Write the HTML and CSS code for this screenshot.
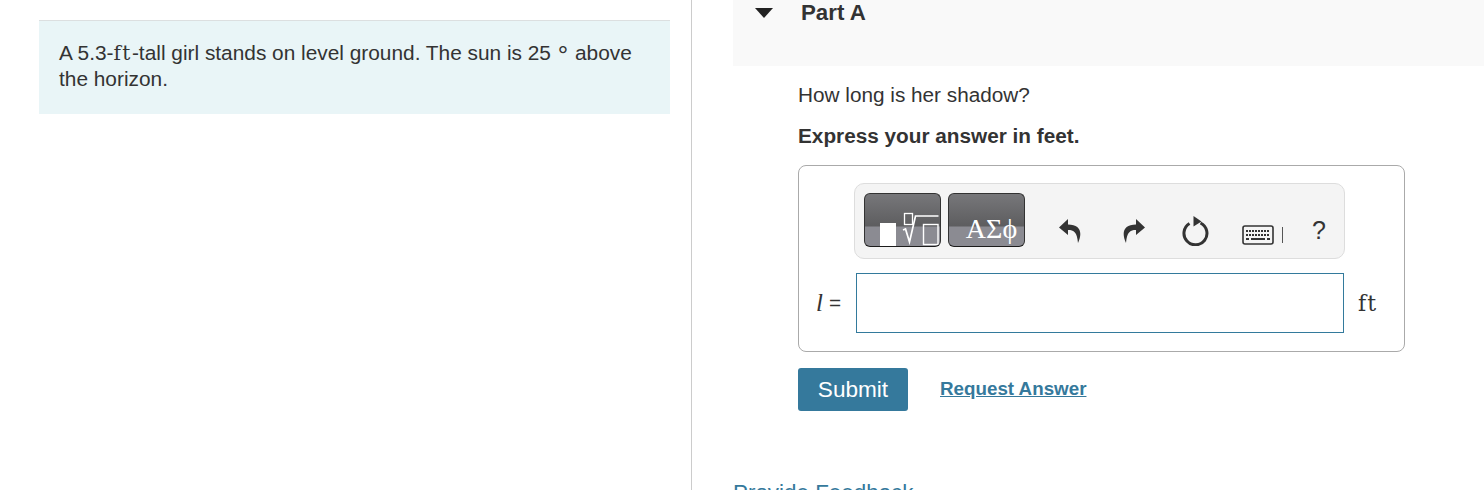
FILE: index.html
```html
<!DOCTYPE html>
<html>
<head>
<link rel="stylesheet" href="styles.css">
</head>
<body>
    <div class="page">
        <div class="left-col">
            <div class="intro">
                A 5.3-<span class="math-text">ft</span>-tall girl stands on level ground. The sun is 25<span class="degree">&#176;</span>above the horizon.
            </div>
        </div>

        <div class="right-col">
            <div class="part-header">
                <svg class="caret" width="18" height="10" viewBox="0 0 18 10"><path d="M0 0H18L9 10Z"/></svg>
                <h2>Part A</h2>
            </div>

            <div class="part-body">
                <p class="question">How long is her shadow?</p>
                <p class="instruction">Express your answer in feet.</p>

                <div class="answer-box">
                    <div class="toolbar">
                        <div class="tool-btn">
                            <svg width="77" height="54" viewBox="0 0 77 54">
                                <rect x="16" y="30" width="16" height="23" fill="#fff"/>
                                <rect x="40.5" y="20.5" width="8" height="11" fill="none" stroke="#fff" stroke-width="1.3"/>
                                <path d="M39 37l2.500 -1l4 13l6 -26h23" fill="none" stroke="#fff" stroke-width="1.7"/>
                                <rect x="59.500" y="31.500" width="14.500" height="20" fill="none" stroke="#fff" stroke-width="1.4"/>
                            </svg>
                        </div>
                        <div class="tool-btn tool-btn-text">&#913;&#931;&#981;</div>

                        <svg class="icon icon-undo" width="24" height="26" viewBox="0 0 24 26"><path d="M10 1L1 9.500L10 17V12C16 12 19 14 20 25C25 14 22 6.500 10 6.500Z"/></svg>
                        <svg class="icon icon-redo" width="24" height="26" viewBox="0 0 24 26"><path d="M14 1L23 9.500L14 17V12C8 12 5 14 4 25C-1 14 2 6.500 14 6.500Z"/></svg>
                        <svg class="icon icon-reset" width="28" height="30" viewBox="0 0 28 30">
                            <path d="M8.500 7.500A11.500 11.500 0 1 0 19.500 7" fill="none" stroke="#333" stroke-width="3"/>
                            <path d="M12.500 0L20.500 5.500L12.500 10.500Z"/>
                        </svg>
                        <svg class="icon icon-keyboard" width="32" height="20" viewBox="0 0 32 20">
                            <rect x="1" y="1" width="30" height="18" rx="2" fill="#f4f4f4" stroke="#333" stroke-width="1.6"/>
                            <path d="M4 6h24M4 10h24" stroke="#333" stroke-width="2" stroke-dasharray="2 1"/>
                            <path d="M4 14h3M9 14h14M25 14h3" stroke="#333" stroke-width="2"/>
                        </svg>
                        <span class="divider"></span>
                        <span class="help">?</span>
                    </div>

                    <div class="answer-row">
                        <span class="var-label"><i>l</i><span class="equals">=</span></span>
                        <div class="answer-input"></div>
                        <span class="unit">ft</span>
                    </div>
                </div>

                <div class="actions">
                    <button class="submit">Submit</button>
                    <a class="request" href="#">Request Answer</a>
                </div>
            </div>

            <a class="feedback" href="#">Provide Feedback</a>
        </div>
    </div>
</body>
</html>
```

FILE: styles.css
```css
html, body {
    margin: 0;
    height: 490px;
    overflow: hidden;
    background-color: #fff;
}

body {
    font-family: "Liberation Sans", Arial, sans-serif;
    font-size: 20.75px;
    color: #333;
}

.page {
    display: flex;
    height: 490px;
}

.left-col {
    box-sizing: border-box;
    width: 692px;
    padding: 20px 21px 0 39px;
    border-right: 1px solid #ccc;
    flex: 0 0 auto;
}

.intro {
    background-color: #e9f5f7;
    border-top: 1px solid #dcdfe0;
    padding: 19px 20px 22px 20px;
    height: 52px;
    font-size: 20.85px;
    line-height: 26px;
}

.math-text {
    font-family: "DejaVu Serif", serif;
    font-size: 20px;
    letter-spacing: 1.5px;
}

.degree {
    display: inline-block;
    width: 24px;
    text-align: center;
    font-size: 26px;
    line-height: 20px;
    vertical-align: -4px;
}

.right-col {
    flex: 1;
    padding-left: 41px;
    min-width: 0;
}

.part-header {
    display: flex;
    align-items: flex-start;
    height: 66px;
    background-color: #f9f9f9;
    padding-left: 22px;
    box-sizing: border-box;
}

.caret {
    fill: #222;
    margin-top: 8px;
}

.part-header h2 {
    margin: 0 0 0 28px;
    font-size: 22.3px;
    line-height: 25px;
    color: #333;
}

.part-body {
    padding-left: 65px;
    width: 607px;
}

.question {
    margin: 17px 0 0 0;
    line-height: 24px;
}

.instruction {
    margin: 17px 0 0 0;
    line-height: 24px;
    font-weight: bold;
}

.answer-box {
    box-sizing: border-box;
    height: 187px;
    margin-top: 17px;
    border: 1px solid #aaa;
    border-radius: 8px;
    padding: 17px 0 0 55px;
}

.toolbar {
    box-sizing: border-box;
    display: flex;
    align-items: flex-start;
    width: 491px;
    height: 76px;
    padding: 9px 0 0 9px;
    background-color: #f4f4f4;
    border: 1px solid #ddd;
    border-radius: 10px;
}

.tool-btn {
    box-sizing: border-box;
    width: 77px;
    height: 54px;
    margin-right: 7px;
    border-radius: 6px;
    border: 1px solid #333;
    border-bottom-color: #1c1c1c;
    overflow: hidden;
    background: linear-gradient(#77777a 0%, #5d5d5f 62%, #8b8b92 63%, #8b8b92 100%);
}

.tool-btn svg {
    display: block;
    margin: -1px;
}

.tool-btn-text {
    color: #fff;
    font-family: "Liberation Serif", serif;
    font-size: 28px;
    line-height: 28px;
    text-align: center;
    padding: 21px 0 0 10px;
}

.icon {
    fill: #333;
    flex: 0 0 auto;
}

.icon-undo {
    margin: 25px 0 0 26px;
}

.icon-redo {
    margin: 25px 0 0 40px;
}

.icon-reset {
    margin: 23px 0 0 35px;
}

.icon-keyboard {
    margin: 32px 0 0 33px;
}

.divider {
    width: 1px;
    height: 16px;
    background-color: #555;
    margin: 34px 0 0 8px;
}

.help {
    margin: 22px 0 0 29px;
    font-size: 25px;
    line-height: 30px;
    color: #333;
}

.answer-row {
    display: flex;
    align-items: center;
    margin: 14px 0 0 -38px;
}

.var-label {
    display: flex;
    align-items: center;
    width: 40px;
    font-family: "Liberation Serif", serif;
    font-size: 25px;
}

.equals {
    margin-left: 6px;
    font-family: "Liberation Sans", Arial, sans-serif;
    font-size: 20.75px;
}

.answer-input {
    box-sizing: border-box;
    width: 488px;
    height: 60px;
    border: 1px solid #337a9c;
    background-color: #fff;
}

.unit {
    margin-left: 14px;
    font-family: "DejaVu Serif", serif;
    font-size: 22px;
    letter-spacing: 1px;
}

.actions {
    display: flex;
    align-items: center;
    margin-top: 16px;
}

.submit {
    width: 110px;
    height: 43px;
    border: none;
    border-radius: 3px;
    background-color: #35799c;
    color: #fff;
    font-family: "Liberation Sans", Arial, sans-serif;
    font-size: 22.6px;
    padding: 0;
}

.request {
    margin: 0 0 2px 32px;
    font-size: 18.8px;
    font-weight: bold;
    color: #35799c;
}

.feedback {
    display: block;
    margin-top: 69px;
    font-size: 22.4px;
    line-height: 26px;
    color: #35799c;
    text-decoration: none;
}
```
